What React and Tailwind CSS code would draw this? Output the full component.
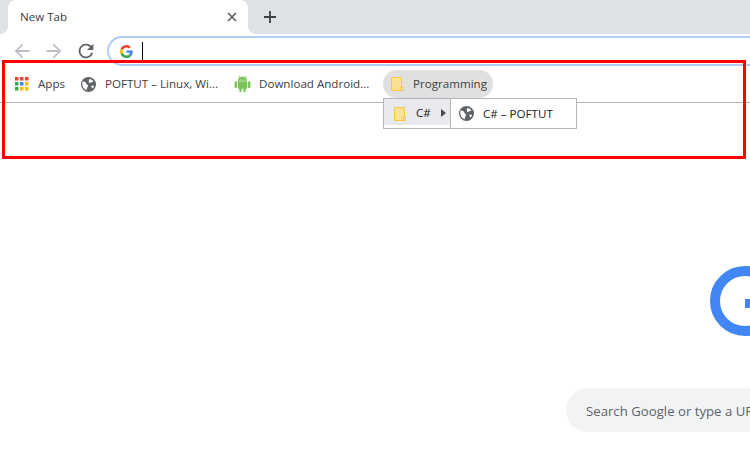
const FONT = "font-['Open_Sans','Noto_Sans',sans-serif]";

const P = {
  back: "M20 11H7.83l5.59-5.59L12 4l-8 8 8 8 1.41-1.41L7.83 13H20v-2z",
  forward: "M4 11h12.17l-5.59-5.59L12 4l8 8-8 8-1.41-1.41L16.17 13H4v-2z",
  reload: "M17.65 6.35C16.2 4.9 14.21 4 12 4c-4.42 0-7.99 3.58-7.99 8s3.57 8 7.99 8c3.73 0 6.84-2.55 7.73-6h-2.08c-.82 2.33-3.04 4-5.65 4-3.31 0-6-2.69-6-6s2.69-6 6-6c1.66 0 3.14.69 4.22 1.78L13 11h7V4l-2.35 2.35z",
  android: "M6 18c0 .55.45 1 1 1h1v3.5c0 .83.67 1.5 1.5 1.5s1.5-.67 1.5-1.5V19h2v3.5c0 .83.67 1.5 1.5 1.5s1.5-.67 1.5-1.5V19h1c.55 0 1-.45 1-1V8H6v10zM3.5 8C2.67 8 2 8.67 2 9.5v7c0 .83.67 1.5 1.5 1.5S5 17.33 5 16.5v-7C5 8.67 4.33 8 3.5 8zm17 0c-.83 0-1.5.67-1.5 1.5v7c0 .83.67 1.5 1.5 1.5s1.5-.67 1.5-1.5v-7c0-.83-.67-1.5-1.5-1.5zm-4.97-5.84l1.3-1.3c.2-.2.2-.51 0-.71-.2-.2-.51-.2-.71 0l-1.48 1.48C13.85 1.23 12.95 1 12 1c-.96 0-1.86.23-2.66.63L7.85.15c-.2-.2-.51-.2-.71 0-.2.2-.2.51 0 .71l1.31 1.31C6.97 3.26 6 5.01 6 7h12c0-1.99-.97-3.75-2.47-4.84zM10 5H9V4h1v1zm5 0h-1V4h1v1z",
};

function Ic({ d, size = 16, fill, className = "" }) {
  return (
    <svg width={size} height={size} viewBox="0 0 24 24" fill={fill} className={`shrink-0 ${className}`}>
      <path d={d} />
    </svg>
  );
}

function Android() {
  return (
    <svg width="19" height="16" viewBox="0 0 24 24" preserveAspectRatio="none" fill="#7cc35a" className="shrink-0">
      <path d={P.android} />
    </svg>
  );
}

function Globe({ className = "" }) {
  return (
    <svg width="15" height="15" viewBox="0 0 15 15" className={`shrink-0 ${className}`}>
      <circle cx="7.5" cy="7.5" r="7.5" fill="#5f6368" />
      <path d="M1.600 4.600C3.400 4.300 4.800 5 5.200 6.400c.3 1 1.500 1.200 1.800 2.100.3 1-.5 1.600-.9 2.400-.3.700-.4 1.400-.3 2.300C3.600 12.500 1.800 10.700 1.400 8.400c-.2-1.300-.1-2.700.2-3.800z" fill="#fff" />
      <path d="M8.400 2c1.800.2 3.400 1.300 4.200 2.800-1-.1-1.900.1-2.500.7-.7.6-1.700.6-2.100-.1C7.600 4.700 8 3.200 8.400 2z" fill="#fff" />
      <path d="M10.800 8.700c.8-.2 1.600 0 2.300.4-.3 1-.9 1.900-1.600 2.500-.4-.5-.8-1-1.100-1.500-.3-.6-.1-1.200.4-1.400z" fill="#fff" />
    </svg>
  );
}

function Folder({ className = "" }) {
  return (
    <svg width="12" height="14" viewBox="0 0 12 14" className={`shrink-0 ${className}`}>
      <path d="M.5.5h10v9.500h1v3.500H.5z" fill="#fde293" stroke="#f6c945" />
      <path d="M9 10.500h2.500v3H9z" fill="#fde293" stroke="#f6c945" />
    </svg>
  );
}

function Apps() {
  const c = ["#ea4335", "#ea4335", "#ea4335", "#34a853", "#4285f4", "#fbbc05", "#34a853", "#fbbc05", "#fbbc05"];
  return (
    <svg width="14" height="14" viewBox="0 0 14 14" className="shrink-0">
      {c.map((x, i) => (
        <rect key={i} x={(i % 3) * 5} y={Math.floor(i / 3) * 5} width="3.500" height="3.500" fill={x} />
      ))}
    </svg>
  );
}

function GMark() {
  return (
    <svg width="13" height="13" viewBox="0 0 48 48" className="shrink-0">
      <path fill="#EA4335" d="M24 9.500c3.540 0 6.710 1.220 9.210 3.600l6.850-6.850C35.900 2.380 30.470 0 24 0 14.620 0 6.510 5.380 2.560 13.220l7.980 6.190C12.430 13.720 17.740 9.500 24 9.500z" />
      <path fill="#4285F4" d="M46.980 24.550c0-1.570-.15-3.090-.38-4.550H24v9.020h12.940c-.58 2.960-2.260 5.480-4.780 7.180l7.730 6c4.510-4.180 7.090-10.360 7.090-17.650z" />
      <path fill="#FBBC05" d="M10.530 28.590c-.48-1.450-.76-2.990-.76-4.590s.27-3.140.76-4.590l-7.980-6.190C.92 16.460 0 20.120 0 24c0 3.880.92 7.540 2.560 10.780l7.970-6.190z" />
      <path fill="#34A853" d="M24 48c6.480 0 11.930-2.130 15.890-5.810l-7.730-6c-2.150 1.450-4.920 2.300-8.160 2.300-6.260 0-11.570-4.220-13.470-9.910l-7.980 6.190C6.510 42.620 14.620 48 24 48z" />
    </svg>
  );
}

export default function App() {
  return (
    <div className={`relative w-[750px] h-[461px] overflow-hidden bg-white ${FONT}`}>
      {/* tab strip */}
      <div className="h-[34px] bg-[#dee1e6] flex items-stretch pl-[8px]">
        <div className="relative w-[240px] bg-white rounded-t-[8px] flex items-center pl-[12px] pr-[11px] justify-between">
          <span className="absolute left-[-8px] bottom-0 w-[8px] h-[8px] bg-white" />
          <span className="absolute left-[-8px] bottom-0 w-[8px] h-[8px] bg-[#dee1e6] rounded-br-[8px]" />
          <span className="absolute right-[-8px] bottom-0 w-[8px] h-[8px] bg-white" />
          <span className="absolute right-[-8px] bottom-0 w-[8px] h-[8px] bg-[#dee1e6] rounded-bl-[8px]" />
          <span className="text-[11.6px] text-[#3c4043]">New Tab</span>
          <svg width="10" height="10" viewBox="0 0 10 10" className="shrink-0">
            <path d="M1 1l8 8M9 1l-8 8" stroke="#5f6368" strokeWidth="1.7" />
          </svg>
        </div>
        <div className="ml-[16px] flex items-center">
          <svg width="12" height="12" viewBox="0 0 12 12">
            <path d="M6 0v12M0 6h12" stroke="#3c4043" strokeWidth="1.8" />
          </svg>
        </div>
      </div>

      {/* toolbar */}
      <div className="h-[34px] flex items-center pl-[11px] bg-white">
        <Ic d={P.back} size={22} fill="#bdc1c6" />
        <Ic d={P.forward} size={22} fill="#bdc1c6" className="ml-[10px]" />
        <Ic d={P.reload} size={22} fill="#5f6368" className="ml-[10px]" />
        <div className="ml-[10px] flex-1 h-[30px] mr-[-30px] rounded-full border-2 border-[#aecbfa] flex items-center pl-[11px]">
          <GMark />
          <div className="ml-[9px] w-px h-[18px] bg-black" />
        </div>
      </div>

      {/* bookmarks bar */}
      <div className="h-[35px] border-b border-[#b5b5b5] flex items-center pl-[15px] pb-[2px] text-[11.6px] text-[#3c4043] bg-white">
        <Apps />
        <span className="ml-[9px] w-[43px]">Apps</span>
        <Globe />
        <span className="ml-[9px] w-[128px]">POFTUT – Linux, Wi...</span>
        <Android />
        <span className="ml-[7px] w-[124px] whitespace-nowrap">Download Android...</span>
        <div className="h-[28px] w-[110px] rounded-full bg-[#e0e0e0] flex items-center pl-[8px]">
          <Folder />
          <span className="ml-[10px]">Programming</span>
        </div>
      </div>

      {/* new tab page */}
      <div className="pl-[566px] w-[1400px]">
        <div className="ml-[144px] mt-[163px]">
          <svg width="70" height="70" viewBox="0 0 70 70" className="block">
            <path d="M35 5a30 30 0 1 0 0 60a30 30 0 0 0 0-60z" fill="none" stroke="#4285f4" strokeWidth="10" />
            <rect x="35" y="33" width="35" height="9" fill="#4285f4" />
          </svg>
        </div>
        <div className="mt-[52px] w-[584px] h-[44px] rounded-full bg-[#f1f3f4] flex items-center pl-[20px] pt-[3px] text-[13.2px] text-[#5f6368]">
          Search Google or type a URL
        </div>
      </div>

      {/* folder menus */}
      <div className="absolute left-[383px] top-[98px] flex text-[11.6px] text-[#202124]">
        <div className="w-[67px] h-[31px] bg-white border border-[#b5b5b5] border-r-0">
          <div className="h-[26px] bg-[#e8eaed] flex items-center pl-[10px] pt-[1px]">
            <Folder className="mt-[2px]" />
            <span className="ml-[10px]">C#</span>
            <svg width="5" height="8" viewBox="0 0 5 8" className="ml-[10px]"><path d="M0 0l5 4-5 4z" fill="#4a4a4a" /></svg>
          </div>
        </div>
        <div className="w-[127px] h-[31px] bg-white border border-[#b5b5b5] flex items-center pl-[8px]">
          <Globe />
          <span className="ml-[9px]">C# – POFTUT</span>
        </div>
      </div>

      {/* red annotation */}
      <div className="absolute left-[2px] top-[60px] w-[744px] h-[99px] border-[3px] border-[#ff0000]" />
    </div>
  );
}
